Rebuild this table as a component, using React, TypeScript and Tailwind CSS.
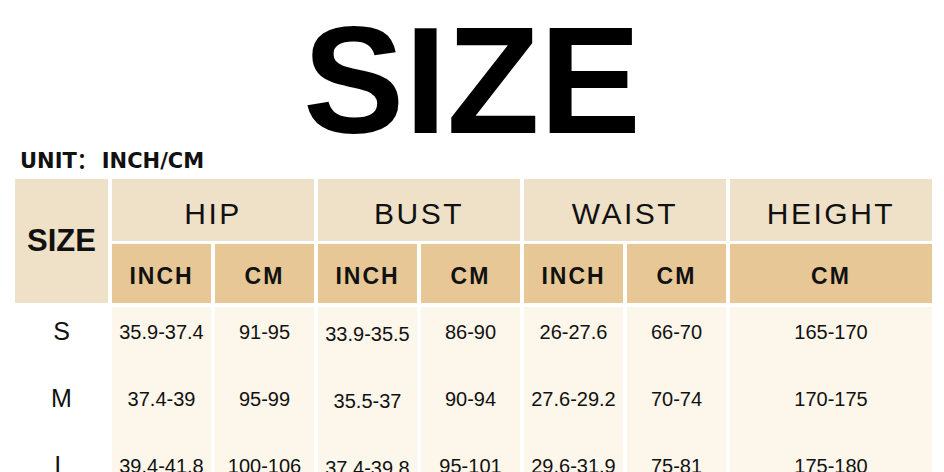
const GROUPS = ["HIP", "BUST", "WAIST", "HEIGHT"];

const ROWS = [
  { size: "S", vals: ["35.9-37.4", "91-95", "33.9-35.5", "86-90", "26-27.6", "66-70", "165-170"] },
  { size: "M", vals: ["37.4-39", "95-99", "35.5-37", "90-94", "27.6-29.2", "70-74", "170-175"] },
  { size: "L", vals: ["39.4-41.8", "100-106", "37.4-39.8", "95-101", "29.6-31.9", "75-81", "175-180"] },
];

const arial = "font-['Liberation_Sans',Arial,sans-serif]";

export default function App() {
  return (
    <div className={`w-[944px] h-[472px] overflow-hidden bg-white text-[#111] ${arial}`}>
      <div className="mt-[15px] text-center text-[152px] leading-[130px] font-bold text-black">SIZE</div>

      <div className="mt-[4px] pl-[20px] text-[21px] leading-[24px] font-bold font-['DejaVu_Sans','Noto_Sans_CJK_SC',sans-serif]">
        UNIT：<span className="ml-[4px]">INCH/CM</span>
      </div>

      <div className="ml-[15px] mt-[6px]">
        {/* header */}
        <div className="grid grid-cols-[93px_repeat(8,99px)] grid-rows-[62px_59px] gap-x-1 gap-y-[3px]">
          <div className="row-span-2 flex items-center justify-center bg-[#efe1c8] text-[31px] font-bold">
            SIZE
          </div>
          {GROUPS.map((g) => (
            <div
              key={g}
              className="col-span-2 flex items-center justify-center bg-[#efe1c8] pt-[7px] text-[30px] tracking-[2.5px]"
            >
              {g}
            </div>
          ))}
          {["INCH", "CM", "INCH", "CM", "INCH", "CM"].map((u, i) => (
            <div
              key={i}
              className="flex items-center justify-center bg-[#e8c797] pt-[5px] text-[23px] font-bold tracking-[2px]"
            >
              {u}
            </div>
          ))}
          <div className="col-span-2 flex items-center justify-center bg-[#e8c797] pt-[5px] text-[23px] font-bold tracking-[2px]">
            CM
          </div>
        </div>

        {/* body */}
        <div className="mt-1 grid grid-cols-[93px_repeat(8,99px)] gap-x-1">
          {ROWS.map((r) => (
            <div key={r.size} className="contents">
              <div className="h-[67px] pt-[9px] text-center text-[25px] leading-[30px]">{r.size}</div>
              {r.vals.map((v, i) => (
                <div
                  key={i}
                  className={`h-[67px] bg-[#fdf6ea] text-center text-[20px] leading-[24px] ${
                    i === 2 ? "pt-[15px]" : "pt-[13px]"
                  } ${i === 6 ? "col-span-2" : ""}`}
                >
                  {v}
                </div>
              ))}
            </div>
          ))}
        </div>
      </div>
    </div>
  );
}
